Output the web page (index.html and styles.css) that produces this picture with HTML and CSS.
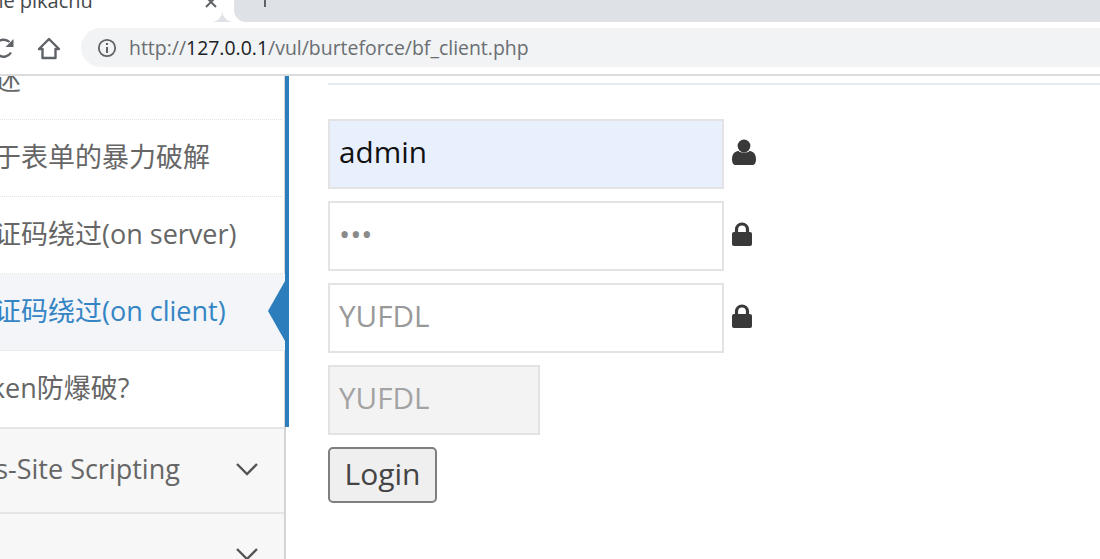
FILE: index.html
```html
<!DOCTYPE html>
<html lang="zh">
<head>
    <meta charset="UTF-8">
    <meta name="viewport" content="width=device-width, initial-scale=1.0">
    <title>Get the pikachu</title>
    <link rel="stylesheet" href="styles.css">
</head>
<body>
    <div class="tabstrip">
        <div class="tab">
            <span class="tab-title">the pikachu</span>
            <svg class="tab-close" width="14" height="14" viewBox="0 0 14 14"><path d="M1 -3 L11 7 M11 -3 L1 7" stroke="#5f6368" stroke-width="2" fill="none"/></svg>
        </div>
        <div class="tab-rest">
            <span class="new-tab"></span>
        </div>
    </div>

    <div class="toolbar">
        <svg class="reload" width="24" height="24" viewBox="0 0 24 24"><path d="M21 16.5 A8.5 8.5 0 1 1 19.5 6" stroke="#5f6368" stroke-width="2.4" fill="none"/><path d="M23.5 3 V11 H15.5 Z" fill="#5f6368"/></svg>
        <svg class="home" width="24" height="24" viewBox="0 0 24 24"><path d="M12 3 L22 13 H18.5 V22 H5.5 V13 H2 Z" stroke="#5f6368" stroke-width="2.4" stroke-linejoin="round" fill="none"/></svg>
        <div class="omnibox">
            <svg width="20" height="20" viewBox="0 0 20 20"><circle cx="10" cy="10" r="8.2" stroke="#5f6368" stroke-width="1.8" fill="none"/><path d="M10 9 V15 M10 5 V7" stroke="#5f6368" stroke-width="2" fill="none"/></svg>
            <span class="url">http://<b>127.0.0.1</b>/vul/burteforce/bf_client.php</span>
        </div>
    </div>

    <div class="page">
        <div class="sidebar">
            <ul class="submenu">
                <li><span>概述</span></li>
                <li><span>基于表单的暴力破解</span></li>
                <li><span>验证码绕过(on server)</span></li>
                <li class="active"><span>验证码绕过(on client)</span></li>
                <li class="last"><span class="token">token防爆破?</span></li>
            </ul>
            <div class="menu-item">
                <span class="xss">Cross-Site Scripting</span>
                <svg width="24" height="14" viewBox="0 0 24 14"><path d="M2 2 L12 12 L22 2" stroke="#555" stroke-width="2.4" fill="none"/></svg>
            </div>
            <div class="menu-item">
                <span></span>
                <svg width="24" height="14" viewBox="0 0 24 14"><path d="M2 2 L12 12 L22 2" stroke="#555" stroke-width="2.4" fill="none"/></svg>
            </div>
        </div>

        <div class="main">
            <hr class="rule">
            <form class="login">
                <div class="field">
                    <input class="filled" type="text" value="admin">
                    <svg width="24" height="26" viewBox="0 0 24 26"><circle cx="12" cy="7" r="6.4" fill="#393939"/><path d="M0 20 C0 14 4 12 6.5 12 C8 14 16 14 17.5 12 C20 12 24 14 24 20 C24 25 22 26 20 26 H4 C2 26 0 25 0 20 Z" fill="#393939"/></svg>
                </div>
                <div class="field">
                    <input class="pass" type="password" value="123">
                    <svg width="20" height="24" viewBox="0 0 20 24"><path d="M4.5 11 V7.5 A5.5 5.5 0 0 1 15.5 7.5 V11" stroke="#393939" stroke-width="3.2" fill="none"/><rect x="0" y="10" width="20" height="14" rx="2" fill="#393939"/></svg>
                </div>
                <div class="field">
                    <input class="code" type="text" value="YUFDL">
                    <svg width="20" height="24" viewBox="0 0 20 24"><path d="M4.5 11 V7.5 A5.5 5.5 0 0 1 15.5 7.5 V11" stroke="#393939" stroke-width="3.2" fill="none"/><rect x="0" y="10" width="20" height="14" rx="2" fill="#393939"/></svg>
                </div>
                <div class="field">
                    <input class="code captcha" type="text" value="YUFDL">
                </div>
                <button type="button">Login</button>
            </form>
        </div>
    </div>
</body>
</html>
```

FILE: styles.css
```css
* {
    box-sizing: border-box;
}

html, body {
    height: 559px;
}

body {
    margin: 0;
    overflow: hidden;
    font-family: "Open Sans", "Noto Sans CJK SC", sans-serif;
    background: #fff;
    color: #666;
}

/* browser chrome */
.tabstrip {
    display: flex;
    height: 22px;
    background: #dee1e6;
    overflow: hidden;
}

.tab {
    display: flex;
    justify-content: space-between;
    width: 222px;
    background: #fff;
    padding-right: 3px;
    border-bottom-right-radius: 10px;
}

.tab-title {
    margin: -13px 0 0 -16px;
    font-size: 20px;
    line-height: 28px;
    color: #45484c;
}

.tab-rest {
    flex: 1;
    margin-left: 12px;
    background: #dee1e6;
    box-shadow: -12px 0 0 #fff;
    border-bottom-left-radius: 12px;
    padding-left: 17px;
}

.new-tab {
    display: block;
    width: 2px;
    height: 7px;
    background: #5f6368;
    margin-left: 13px;
}

.toolbar {
    display: flex;
    align-items: center;
    height: 54px;
    background: #fff;
    border-bottom: 2px solid #dcdcdc;
    padding-bottom: 1px;
}

.reload {
    margin-left: -10px;
}

.home {
    margin-left: 23px;
}

.omnibox {
    flex: 1;
    display: flex;
    align-items: center;
    gap: 12px;
    height: 39px;
    margin-left: 20px;
    padding-left: 16px;
    background: #f1f3f4;
    border-radius: 20px 0 0 20px;
}

.url {
    font-size: 19.45px;
    color: #6a6e73;
    white-space: nowrap;
}

.url b {
    font-weight: 400;
    color: #202124;
}

/* page */
.page {
    display: flex;
    height: 484px;
    overflow: hidden;
}

.sidebar {
    flex: none;
    width: 286px;
    border-right: 2px solid #d5d5d5;
    font-size: 27px;
}

.submenu {
    list-style: none;
    margin: -33px -5px 0 0;
    padding: 0;
    border-right: 4px solid #2b7dbc;
}

.submenu li {
    position: relative;
    display: flex;
    align-items: center;
    height: 77px;
    padding-bottom: 6px;
    border-bottom: 1px dotted #e4e4e4;
    white-space: nowrap;
}

.submenu li span {
    margin-left: -33px;
}

.submenu li .token {
    margin-left: -35px;
}

.submenu li.active {
    background: #f3f5f9;
    color: #3585c5;
}

.submenu li.active::after {
    content: "";
    position: absolute;
    right: 0;
    top: 7px;
    border-style: solid;
    border-width: 30px 17px 30px 0;
    border-color: transparent #2b7dbc transparent transparent;
}

.submenu li.last {
    height: 76px;
    border-bottom: none;
}

.menu-item {
    display: flex;
    align-items: center;
    justify-content: space-between;
    height: 85px;
    padding: 0 25px 4px 0;
    background: #f7f7f7;
    border-top: 2px solid #e5e5e5;
    white-space: nowrap;
}

.xss {
    margin-left: -62px;
}

.main {
    flex: 1;
    padding: 7px 0 0 42px;
}

.rule {
    height: 2px;
    margin: 0 0 34px;
    border: none;
    background: #e3ebf3;
}

.field {
    display: flex;
    align-items: center;
    gap: 8px;
    margin-bottom: 12px;
}

.field svg {
    margin-bottom: 4px;
}

input {
    width: 396px;
    height: 70px;
    padding: 0 9px 5px;
    border: 2px solid #e3e3e3;
    font-family: inherit;
    font-size: 29.7px;
    color: #8a8a8a;
    outline: none;
}

.filled {
    background: #e8f0fe;
    color: #111;
}

.code {
    color: #999;
}

.captcha {
    width: 212px;
    background: #f3f3f3;
    color: #a3a3a3;
}

button {
    display: block;
    width: 109px;
    height: 56px;
    padding: 0 0 4px;
    background: #efefef;
    border: 2px solid #7f7f7f;
    border-radius: 5px;
    font-family: inherit;
    font-size: 30px;
    color: #444;
}
```
